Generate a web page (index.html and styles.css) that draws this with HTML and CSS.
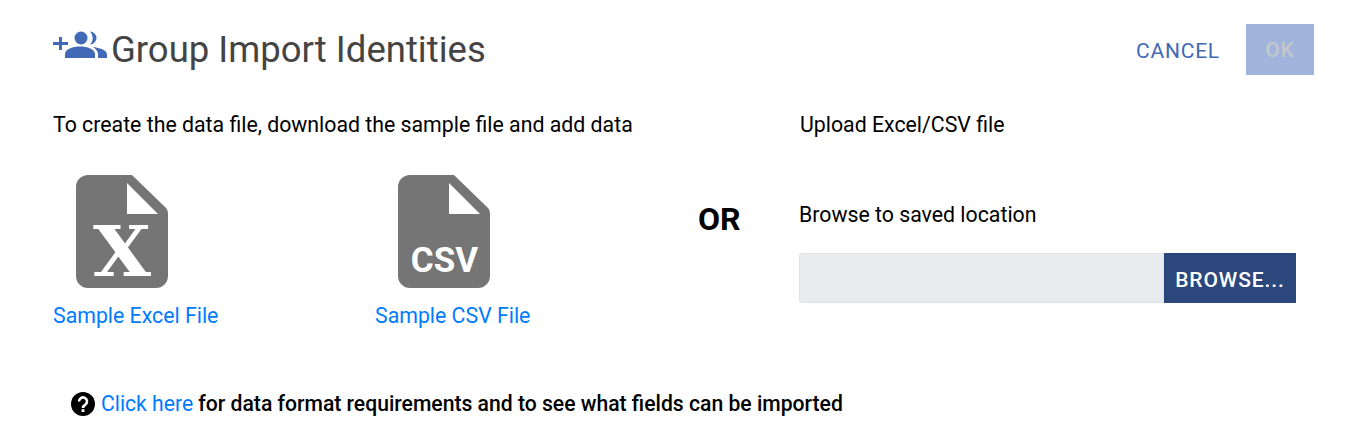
FILE: index.html
```html
<!DOCTYPE html>
<html lang="en">
<head>
    <meta charset="UTF-8">
    <meta name="viewport" content="width=device-width, initial-scale=1.0">
    <title>Group Import Identities</title>
    <link rel="stylesheet" href="styles.css">
</head>
<body>
    <div class="dialog">
        <!-- title and actions -->
        <div class="header">
            <div class="title-wrap">
                <svg class="title-icon" width="56" height="28" viewBox="0 0 56 28">
                    <path d="M1 12.500h15M8.500 6v13" stroke="#4169b5" stroke-width="3" fill="none"/>
                    <circle cx="29" cy="7" r="6.500" fill="#4169b5"/>
                    <path d="M38 .5a6.500 6.500 0 0 1 0 13a9 9 0 0 0 0-13z" fill="#4169b5"/>
                    <path d="M13 27v-4c0-5 8-7.500 15-7.500S43 18 43 23v4z" fill="#4169b5"/>
                    <path d="M41 16c6 .8 14 3 14 7.500V27h-9v-3.500c0-3-2-5.500-5-7.500z" fill="#4169b5"/>
                </svg>
                <h1>Group Import Identities</h1>
            </div>
            <div class="actions">
                <button class="btn-cancel">CANCEL</button>
                <button class="btn-ok">OK</button>
            </div>
        </div>

        <div class="content">
            <div class="col-left">
                <p class="label">To create the data file, download the sample file and add data</p>
                <div class="samples">
                    <div class="sample">
                        <svg class="file-icon" width="92" height="113" viewBox="0 0 92 113">
                            <path d="M12 0H56L90 33Q92 35 92 38V101a12 12 0 0 1-12 12H12A12 12 0 0 1 0 101V12A12 12 0 0 1 12 0Z" fill="#757575"/>
                            <path d="M51 8L82 39H51Z" fill="#fff"/>
                            <text class="file-x" x="46" y="101" text-anchor="middle" textLength="58" lengthAdjust="spacingAndGlyphs">X</text>
                        </svg>
                        <a href="#" class="link">Sample Excel File</a>
                    </div>
                    <div class="sample">
                        <svg class="file-icon" width="92" height="113" viewBox="0 0 92 113">
                            <path d="M12 0H56L90 33Q92 35 92 38V101a12 12 0 0 1-12 12H12A12 12 0 0 1 0 101V12A12 12 0 0 1 12 0Z" fill="#757575"/>
                            <path d="M51 8L82 39H51Z" fill="#fff"/>
                            <text class="file-csv" x="46.500" y="97" text-anchor="middle">CSV</text>
                        </svg>
                        <a href="#" class="link">Sample CSV File</a>
                    </div>
                </div>
            </div>
            <div class="col-or">OR</div>
            <div class="col-right">
                <p class="label">Upload Excel/CSV file</p>
                <p class="label browse-label">Browse to saved location</p>
                <div class="file-row">
                    <div class="file-input"></div>
                    <button class="btn-browse">BROWSE...</button>
                </div>
            </div>
        </div>

        <div class="help">
            <svg class="help-icon" width="24" height="24" viewBox="0 0 24 24">
                <circle cx="12" cy="12" r="12" fill="#000"/>
                <path d="M8 9.500a4 4 0 1 1 6.300 3.200c-1.500 1-2.300 1.600-2.300 3.300" stroke="#fff" stroke-width="2.600" fill="none"/>
                <rect x="10.600" y="17.200" width="2.800" height="2.800" fill="#fff"/>
            </svg>
            <span><a href="#" class="link">Click here</a> for data format requirements and to see what fields can be imported</span>
        </div>
    </div>
</body>
</html>
```

FILE: styles.css
```css
body {
    margin: 0;
    font-family: Roboto, "Liberation Sans", sans-serif;
    background-color: #fff;
    color: #000;
}

.dialog {
    padding: 24px 31px 0 52px;
}

/* header */
.header {
    display: flex;
    justify-content: space-between;
    align-items: center;
    height: 51px;
}

.title-wrap {
    display: flex;
    align-items: center;
}

.title-icon {
    margin-bottom: 9px;
    flex-shrink: 0;
}

h1 {
    margin: 0 0 1px 3px;
    font-size: 36.500px;
    font-weight: 400;
    color: #444;
}

.actions {
    display: flex;
    align-items: center;
    gap: 26px;
}

button {
    font-family: inherit;
    border: none;
    padding: 0;
}

.btn-cancel {
    background: none;
    color: #4169b5;
    font-size: 21px;
    font-weight: 400;
    letter-spacing: 0.8px;
    padding-top: 2px;
}

.btn-ok {
    width: 68px;
    height: 51px;
    background-color: #a0b4dc;
    color: #c4c7ca;
    font-size: 21px;
    font-weight: 500;
    letter-spacing: 1px;
}

/* columns */
.content {
    display: flex;
    margin-top: 37px;
}

.label {
    margin: 0;
    font-size: 21.300px;
    line-height: 26px;
}

.col-left {
    width: 622px;
    flex-shrink: 0;
    padding-left: 1px;
    box-sizing: border-box;
}

.samples {
    display: grid;
    grid-template-columns: 322px 1fr;
    margin-top: 37px;
}

.sample {
    display: flex;
    flex-direction: column;
    align-items: flex-start;
}

.file-icon {
    margin-left: 23px;
    margin-bottom: 15px;
    overflow: visible;
}

.file-x {
    font-family: "DejaVu Serif", serif;
    font-weight: 700;
    font-size: 70px;
    fill: #fff;
}

.file-csv {
    font-family: Roboto, sans-serif;
    font-weight: 700;
    font-size: 35px;
    fill: #fff;
}

.link {
    color: #007bff;
    text-decoration: none;
    font-size: 21.300px;
    line-height: 26px;
}

.col-or {
    width: 125px;
    flex-shrink: 0;
    padding: 88px 0 0 24px;
    box-sizing: border-box;
    font-size: 32px;
    font-weight: 700;
}

.col-right {
    width: 497px;
    flex-shrink: 0;
}

.col-right .label:first-child {
    margin-left: 1px;
}

.browse-label {
    margin-top: 64px;
}

.file-row {
    display: flex;
    margin-top: 25px;
    height: 50px;
}

.file-input {
    flex: 1;
    background-color: #e9ecef;
    border: 1px solid #dee2e6;
    border-radius: 3px 0 0 3px;
}

.btn-browse {
    width: 132px;
    background-color: #2c477c;
    color: #fff;
    font-size: 21px;
    font-weight: 500;
    letter-spacing: 0.9px;
    padding-top: 3px;
}

/* bottom help line */
.help {
    display: flex;
    align-items: center;
    gap: 6px;
    margin: 62px 0 0 19px;
    font-size: 21.150px;
    font-weight: 500;
}

.help-icon {
    flex-shrink: 0;
}

.help .link {
    font-weight: 400;
    font-size: 21.150px;
}
```
